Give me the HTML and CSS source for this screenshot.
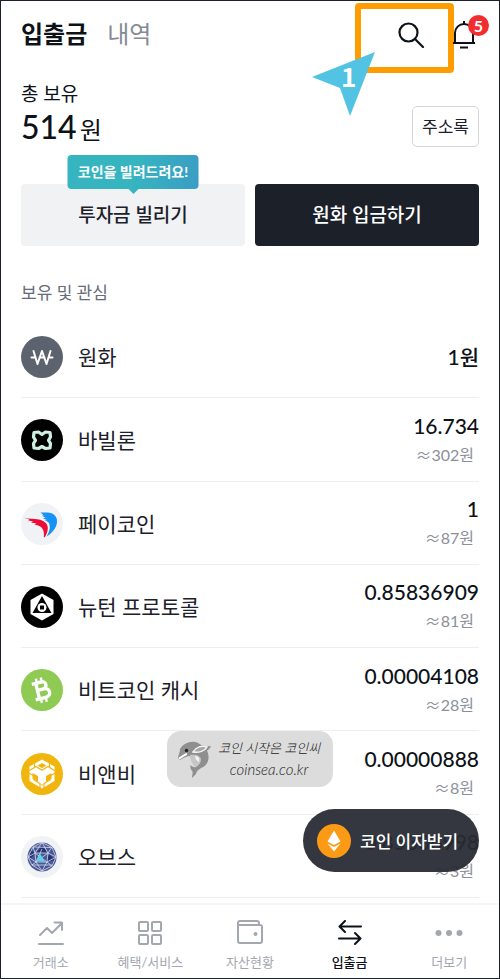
FILE: index.html
```html
<!DOCTYPE html>
<html lang="ko">
<head>
<meta charset="UTF-8">
<meta name="viewport" content="width=device-width, initial-scale=1">
<title>입출금</title>
<link rel="stylesheet" href="styles.css">
</head>
<body>
<header class="top">
  <nav class="top-tabs">
    <a href="#" class="on">입출금</a>
    <a href="#">내역</a>
  </nav>
  <div class="top-icons">
    <button class="icon-btn search" aria-label="검색">
      <svg width="28" height="28" viewBox="0 0 28 28" fill="none" stroke="#0d1118" stroke-width="2.2" stroke-linecap="round"><circle cx="11.5" cy="12.5" r="9"/><path d="M18.5 19.5 26 27"/></svg>
      <span class="mark"></span>
      <svg class="pointer" width="66" height="68" viewBox="0 0 66 68"><path d="M1 27 64 2 39 66 29 38Z" fill="#52c3e2"/><text x="30" y="37">1</text></svg>
    </button>
    <button class="icon-btn bell" aria-label="알림">
      <svg width="24" height="30" viewBox="0 0 24 30" fill="none" stroke="#0d1118" stroke-width="2"><path d="M3 24V14a9 9 0 0 1 18 0v10M1 24h22M8 28.5h8M12 2v4"/></svg>
      <span class="badge">5</span>
    </button>
  </div>
</header>

<section class="total">
  <div>
    <h1>총 보유</h1>
    <p class="sum">514<span>원</span></p>
  </div>
  <button class="address">주소록</button>
</section>

<section class="actions">
  <button class="borrow"><span class="tip">코인을 빌려드려요!</span>투자금 빌리기</button>
  <button class="deposit">원화 입금하기</button>
</section>

<h2>보유 및 관심</h2>
<ul class="coins">
  <li>
    <svg class="coin" viewBox="0 0 42 42"><circle cx="21" cy="21" r="21" fill="#5c636f"/><path d="M12.500 15 16.500 28 21 15 25.500 28 29.500 15M10.500 21.500h4M18.500 21.500h5M27.500 21.500h4" fill="none" stroke="#fff" stroke-width="2" stroke-linecap="round" stroke-linejoin="round"/></svg>
    <span class="name">원화</span>
    <div class="amount">1원</div>
  </li>
  <li>
    <svg class="coin" viewBox="0 0 42 42"><circle cx="21" cy="21" r="21" fill="#000"/><path d="M13 13.500 17.500 13 21 15.500 24.500 13 29 13.500 29.500 18 27.500 21.300 29.500 24.500 29 29 24.500 29.500 21 27.500 17.500 29.500 13 29 12.500 24.500 14.500 21.300 12.500 18Z" fill="none" stroke="#cff0e2" stroke-width="3.200" stroke-linejoin="round"/></svg>
    <span class="name">바빌론</span>
    <div class="amount">16.734<small><i>≈</i>302원</small></div>
  </li>
  <li>
    <svg class="coin" viewBox="0 0 42 42"><circle cx="21" cy="21" r="21" fill="#f1f2f5"/><path d="M19.500 9.500c3 .3 5-.5 9 .3 5.500 1 8.500 5.500 7.300 11C34.500 26.500 30 31 25.500 33.500c2.500-4 4-8 3-12-.6-2.500-2.500-3.500-5-3.700l2.500-.8-4-1.500 2.500-.7-3.700-2 2-.3Z" fill="#1691f5"/><path d="M3 14.700c5 1.500 10 .4 15 1.800 5 1.500 8.800 3.500 8.800 8.500 0 3.500-1.300 6.500-3 9.200l-1-.2c.4-4.500-.2-7.500-2.300-9.500-2-2-4.500-2.300-7-2.700l2-1.200-5.500-1 2-1.200-5-1.200 1.500-.8Z" fill="#ec0c38"/></svg>
    <span class="name">페이코인</span>
    <div class="amount">1<small><i>≈</i>87원</small></div>
  </li>
  <li>
    <svg class="coin" viewBox="0 0 42 42"><circle cx="21" cy="21" r="21" fill="#000"/><path d="M21 7.500 32.500 14v14L21 34.500 9.500 28V14Z" fill="#fff"/><path d="M21 10 30.500 27h-19Z" fill="#000"/><circle cx="21" cy="21.500" r="4.500" fill="#fff"/><path d="M19 19.500h4v4h-4z" fill="#000"/></svg>
    <span class="name">뉴턴 프로토콜</span>
    <div class="amount">0.85836909<small><i>≈</i>81원</small></div>
  </li>
  <li>
    <svg class="coin" viewBox="0 0 42 42"><circle cx="21" cy="21" r="21" fill="#8fca54"/><g transform="rotate(-14 21 21)" fill="none" stroke="#fff" stroke-width="3.400"><path d="M16.500 12v18M12.500 13H22c5.500 0 5.500 7.300 0 7.300h-5.500H23c6.500 0 6.500 8.700 0 8.700H12.500"/><path d="M17.800 8.500v5M22.800 8.500v5M17.800 28.500v5M22.800 28.500v5" stroke-width="2.400"/></g></svg>
    <span class="name">비트코인 캐시</span>
    <div class="amount">0.00004108<small><i>≈</i>28원</small></div>
  </li>
  <li>
    <svg class="coin" viewBox="0 0 42 42"><circle cx="21" cy="21" r="21" fill="#f0b60d"/><path d="M21 6.500 33.500 13.500v14.500L21 35.500 8.500 28V13.500Z" fill="#fff"/><path d="m21 10 4.500 2.500L21 15.200l-4.500-2.700ZM11.500 17v3l5.500 3v6l-5.500-3.200V17M30.500 17v3L25 23v6l5.500-3.200V17M19 31.500l2 1 2-1" fill="#f0b60d"/><path d="m8 20 5 3v4l6 3.500V35M34 20l-5 3v4l-6 3.500V35M8.500 17.500l6.500-4 6 3.700 6-3.700 6.500 4M13.500 10v4M28.500 10v4" fill="none" stroke="#f0b60d" stroke-width="1.200"/></svg>
    <span class="name">비앤비</span>
    <div class="amount">0.00000888<small><i>≈</i>8원</small></div>
  </li>
  <li>
    <svg class="coin" viewBox="0 0 42 42"><circle cx="21" cy="21" r="21" fill="#f1f2f5"/><circle cx="21" cy="21" r="14.500" fill="#4a5797"/><path d="m21 10 6 7H15ZM28 18l6 6-9 2ZM9 14l5 3-5 7Z" fill="#26336e"/><path d="m21 6.500-9 4.500-5 10 4 8 10 6 10-5 4-9-4-9.500ZM12 11l18 .5M21 6.500 14 17l13 0ZM14 17l-7 4 8 5ZM27 17l8 4-9 5ZM14 17l12 9H15l6-13M27 17 15 26l-4 3M26 26l5 4M15 26l6 9 5-9M12 11l2 6M31 11l-4 6M11 29l10 0h10" fill="none" stroke="#d5dced" stroke-width=".8"/><path d="m19 17.500 5 8.500-9-1Z" fill="#5ed0ea"/></svg>
    <span class="name">오브스</span>
    <div class="amount">0.85336998<small><i>≈</i>3원</small></div>
  </li>
</ul>

<nav class="tabbar">
  <a href="#">
    <svg width="26" height="26" viewBox="0 0 26 26"><path d="M2 15 9 8l5 5L24 3M16.500 2.500H24V10M1 24h24"/></svg>
    거래소
  </a>
  <a href="#">
    <svg width="26" height="26" viewBox="0 0 26 26"><rect x="2" y="2" width="9" height="9" rx="1"/><rect x="15" y="2" width="9" height="9" rx="1"/><rect x="2" y="15" width="9" height="9" rx="1"/><rect x="15" y="15" width="9" height="9" rx="1"/></svg>
    혜택/서비스
  </a>
  <a href="#">
    <svg width="26" height="26" viewBox="0 0 26 26"><path d="M22 5V3q0-2-2-2H3Q1 1 1 3v18q0 2 2 2h20q2 0 2-2V7q0-2-2-2H2"/><circle cx="18.500" cy="14" r="2" fill="currentColor" stroke="none"/></svg>
    자산현황
  </a>
  <a href="#" class="on">
    <svg width="26" height="26" viewBox="0 0 26 26"><path d="M24 6.500H3M8 1 2.500 6.500 8 12M2 18.500h21M18 13l5.500 5.500L18 24"/></svg>
    입출금
  </a>
  <a href="#">
    <svg width="28" height="26" viewBox="0 0 28 26"><g fill="currentColor" stroke="none"><circle cx="3.500" cy="13" r="3"/><circle cx="14" cy="13" r="3"/><circle cx="24.500" cy="13" r="3"/></g></svg>
    더보기
  </a>
</nav>

<button class="interest">
  <svg width="34" height="34" viewBox="0 0 34 34"><circle cx="17" cy="17" r="17" fill="#fd9a15"/><path d="m17 6.500 6.500 11-6.500 3.500-6.500-3.500ZM10.500 19.500 17 23l6.500-3.500L17 27.500Z" fill="#fff"/></svg>
  코인 이자받기
</button>

<div class="watermark">
  <svg width="35" height="39" viewBox="0 0 35 39"><path d="M1 18C1 15 3 13 3 9 6 4 12 1 18 2c3 .5 5 2 7 3.500 3 .5 6 .8 9 .8-1 2-2 3-4 4.500C33 17 32 25 24 28c-3 2-4.500 3.500-5 6l-4 4c0-3 1-5 .5-6.500-1.500-1.500-2.500-3.500-2-6.500 2 2 4 2.500 6 2-3-2-5-6-5.500-11C10 16 6 18 3 20Z" fill="#8f8f8f"/><path d="M13 15c5-1 10 0 11 4 0 4-2 6-5 8-3-2-6-6-6-12Z" fill="#c6c6c6"/><path d="M18 16c3 0 5 2 4 6-2-1-4-3-4-6Z" fill="#f4f4f4"/><path d="M16 12c3-5 9-7 14-5-2 4-8 6-14 5Z" fill="#a6a6a6" stroke="#f5f5f5" stroke-width="1.500"/><path d="M2 18.500c3-1 5-4 8-4.500" fill="none" stroke="#fff" stroke-width="2"/><circle cx="9.500" cy="10.500" r="1.700" fill="#222"/></svg>
  <p>코인 시작은 코인씨<br><span>coinsea.co.kr</span></p>
</div>
</body>
</html>
```

FILE: styles.css
```css
* { box-sizing: border-box; margin: 0; padding: 0; }
body { position: relative; display: flex; flex-direction: column; min-height: 100vh; background: #fff;
       border: 1px solid #1c202b; color: #0d1118; font-family: Lato, "Noto Sans CJK KR", sans-serif; }
button { font: inherit; border: none; background: none; cursor: pointer; }
a { color: inherit; text-decoration: none; }

.top { display: flex; justify-content: space-between; align-items: center; height: 66px; padding: 0 23px 0 20px; }
.top-tabs { display: flex; gap: 20px; font-size: 24px; line-height: 32px; color: #858b95; }
.top-tabs .on { color: #0d1118; font-weight: bold; }
.top-icons { display: flex; align-items: center; gap: 27px; }
.icon-btn { position: relative; display: flex; }
.mark { position: absolute; top: -17px; right: -29px; width: 99px; height: 70px; border: 6px solid #ff9d00; border-radius: 4px; }
.pointer { position: absolute; top: 30px; left: -86px; }
.pointer text { font: bold 26px "Noto Sans CJK KR", sans-serif; fill: #fff; }
.badge { position: absolute; top: -4px; right: -13px; width: 21px; height: 21px; border-radius: 50%; background: #f12d2f;
         color: #fff; font-size: 16px; line-height: 21px; font-weight: bold; text-align: center; }

.total { display: flex; justify-content: space-between; align-items: flex-end; padding: 13px 20px 0; }
.total h1 { font-size: 19px; line-height: 27px; font-weight: normal; }
.sum { font-size: 32px; line-height: 40px; font-weight: 500; }
.sum span { margin-left: 3px; font-size: 24px; line-height: 24px; font-weight: normal; }
.address { width: 67px; height: 41px; padding-bottom: 2px; border: 1px solid #d3d5d8; border-radius: 5px; font-size: 17px; color: #1c202a; }

.actions { display: grid; grid-template-columns: 1fr 1fr; gap: 10px; padding: 37px 20px 0; }
.actions button { position: relative; height: 62px; padding-bottom: 3px; border-radius: 4px; font-size: 19px; font-weight: 500; }
.borrow { background: #f1f2f4; color: #1c202a; }
.deposit { background: #1c2029; color: #fff; }
.tip { position: absolute; bottom: 57px; left: 50%; width: 131px; transform: translateX(-50%); border-radius: 4px;
       background: linear-gradient(100deg, #36b5c1 50%, #3a9dc4); color: #fff; font-size: 14px; line-height: 34px;
       font-weight: bold; white-space: nowrap; }
.tip::after { content: ""; position: absolute; top: 100%; left: 50%; margin-left: -5px; border: 5px solid transparent; border-top-color: #36b5c1; }

h2 { padding: 33px 20px 8px; font-size: 17px; line-height: 28px; font-weight: normal; color: #656c77; }
.coins { flex: 1; display: grid; grid-auto-rows: 1fr; padding: 0 20px; list-style: none; }
.coins li { display: flex; align-items: center; min-height: 80px; padding-top: 2px; border-bottom: 1px solid #eeeeef; }
.coin { width: 42px; height: 42px; }
.name { margin-left: 15px; font-size: 21px; line-height: 28px; color: #1c202a; }
.amount { margin-left: auto; font-size: 21px; line-height: 28px; font-weight: 500; text-align: right; }
.amount small { display: block; padding-right: 5px; font-size: 16px; font-weight: normal; color: #8b9099; }
.amount i { font-family: "Noto Sans CJK KR", sans-serif; font-style: normal; }

.tabbar { display: grid; grid-template-columns: repeat(5, 1fr); margin-top: 5px; padding: 15px 0 5px;
          border-top: 2px solid #f5f5f6; color: #a3a8af; }
.tabbar a { display: flex; flex-direction: column; align-items: center; gap: 5px; font-size: 13px; line-height: 22px; }
.tabbar svg { fill: none; stroke: currentColor; stroke-width: 2; stroke-linecap: round; stroke-linejoin: round; }
.tabbar .on { color: #0d1118; font-weight: 500; }

.interest { position: absolute; right: 20px; bottom: 106px; display: flex; align-items: center; gap: 9px; width: 176px; height: 63px;
            padding-left: 14px; border-radius: 32px; background: rgba(39, 43, 51, .94); color: #fff; font-size: 17px; font-weight: 500; white-space: nowrap; }
.watermark { position: absolute; bottom: 191px; left: 50%; transform: translateX(-50%); display: flex; align-items: center; gap: 6px;
             width: 166px; height: 56px; padding-left: 10px; border-radius: 14px; background: #dcdcdc; color: #222; }
.watermark p { font-size: 13px; line-height: 21px; font-style: italic; font-weight: 300; text-align: center; white-space: nowrap; }
.watermark span { font-size: 15px; }
```
